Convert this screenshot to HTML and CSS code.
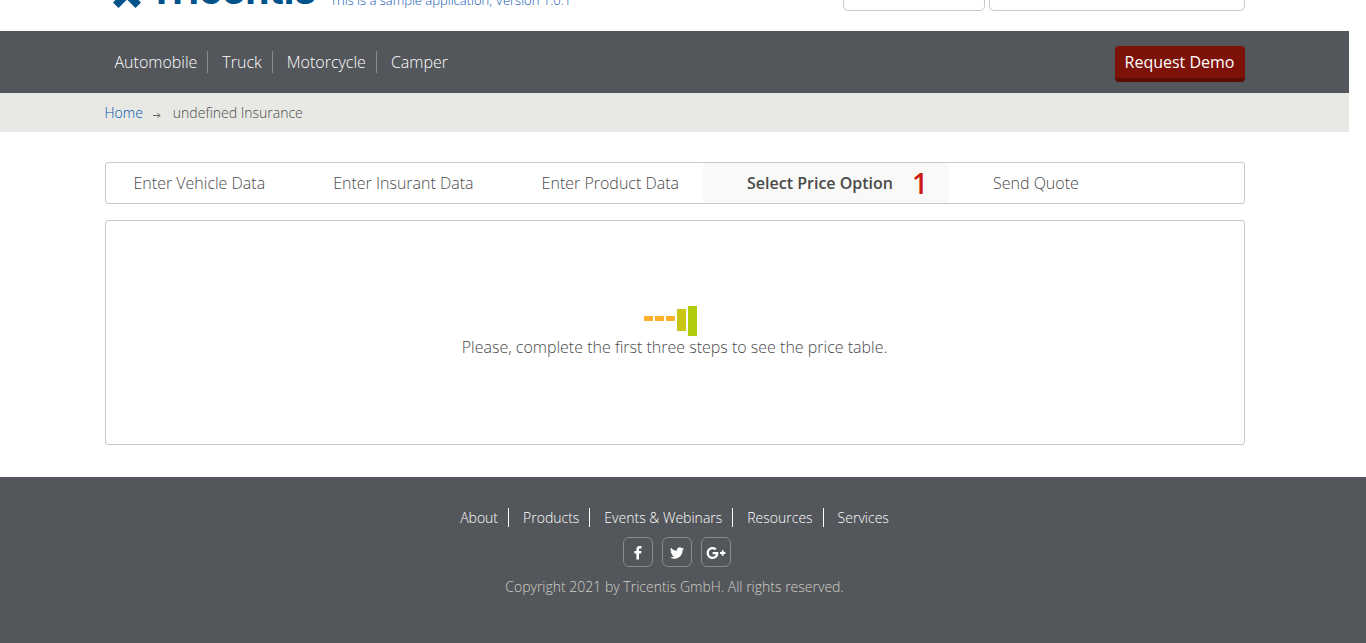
FILE: index.html
```html
<!DOCTYPE html>
<html lang="en">
<head>
<meta charset="utf-8">
<title>Select Price Option</title>
<link rel="stylesheet" href="styles.css">
</head>
<body>
<header class="header">
  <div class="container header-row">
    <a class="logo" href="#">
      <svg class="logo-mark" viewBox="0 0 28 28" aria-hidden="true"><path d="M0 22.500L8.500 14L0 5.500L5.500 0L14 8.500L22.500 0L28 5.500L19.500 14L28 22.500L22.500 28L14 19.500L5.500 28Z"/></svg>
      <span class="logo-name">Tricentis</span>
    </a>
    <a class="version" href="#">This is a sample application, Version 1.0.1</a>
    <div class="header-tools">
      <select class="tool tool-select" aria-label="Language"></select>
      <input class="tool tool-search" type="text" aria-label="Search">
    </div>
  </div>
</header>
<nav class="nav" aria-label="Insurance types">
  <div class="container nav-row">
    <ul class="links nav-links">
      <li><a href="#">Automobile</a></li>
      <li><a href="#">Truck</a></li>
      <li><a href="#">Motorcycle</a></li>
      <li><a href="#">Camper</a></li>
    </ul>
    <button class="demo" type="button">Request Demo</button>
  </div>
</nav>
<div class="crumbs">
  <div class="container crumbs-row">
    <a href="#">Home</a>
    <svg class="crumb-arrow" viewBox="0 0 8 7" aria-hidden="true"><path d="M0 3.500H7M4.500 1L7 3.500L4.500 6"/></svg>
    <span>undefined Insurance</span>
  </div>
</div>
<main class="main">
  <div class="container main-stack">
    <ul class="tabs">
      <li><a class="tab tab-first" href="#">Enter Vehicle Data</a></li>
      <li><a class="tab" href="#">Enter Insurant Data</a></li>
      <li><a class="tab" href="#">Enter Product Data</a></li>
      <li><a class="tab tab-active" href="#" aria-current="step">Select Price Option<span class="counter">1</span></a></li>
      <li><a class="tab" href="#">Send Quote</a></li>
    </ul>
    <section class="panel">
      <svg class="loader" viewBox="0 0 53 30" aria-hidden="true">
        <path fill="#ffb12b" d="M0 10h9v5H0zM11 10h9v5h-9zM22 10h9v5h-9z"/>
        <path fill="#cac514" d="M33 3h9v22h-9z"/>
        <path fill="#b2cc0c" d="M44 0h9v30h-9z"/>
      </svg>
      <p class="notice">Please, complete the first three steps to see the price table.</p>
    </section>
  </div>
</main>
<footer class="footer">
  <ul class="links footer-links">
    <li><a href="#">About</a></li>
    <li><a href="#">Products</a></li>
    <li><a href="#">Events &amp; Webinars</a></li>
    <li><a href="#">Resources</a></li>
    <li><a href="#">Services</a></li>
  </ul>
  <div class="social">
    <a href="#" aria-label="Facebook"><svg width="8" height="14" viewBox="0 0 8 14"><path d="M7.500 0.100V2.400H6.200C5.200 2.400 5 2.900 5 3.600V5H7.400L7.100 7.500H5V13.500H2.400V7.500H0.400V5H2.400V3.200C2.400 1.100 3.700 0 5.600 0C6.500 0 7.300 0.100 7.500 0.100Z"/></svg></a>
    <a href="#" aria-label="Twitter"><svg width="14" height="14" viewBox="0 0 24 24"><path d="M24 4.600a10 10 0 0 1-2.800.8 5 5 0 0 0 2.100-2.700c-.9.500-2 1-3.100 1.200A4.900 4.900 0 0 0 11.800 8.400C7.700 8.200 4.100 6.200 1.700 3.200a4.900 4.900 0 0 0 1.500 6.500c-.8 0-1.600-.2-2.200-.6v.1c0 2.300 1.600 4.300 3.900 4.800-.7.200-1.500.2-2.200.1a4.900 4.900 0 0 0 4.600 3.400A9.900 9.900 0 0 1 0 19.500 14 14 0 0 0 7.500 21.700c9.200 0 14-7.500 14-14v-.6A10 10 0 0 0 24 4.600z"/></svg></a>
    <a href="#" aria-label="Google Plus"><svg width="20" height="12" viewBox="0 0 36 23"><path d="M22.500 11.700c0 6.600-4.400 11.300-11.100 11.300C5.100 23 0 17.900 0 11.500S5.100 0 11.500 0c3 0 5.700 1.100 7.700 3l-3.200 3.100c-1.200-1.100-2.700-1.700-4.500-1.700a7.100 7.100 0 0 0 0 14.200c4.500 0 6.200-3.200 6.400-4.900h-6.400V9.600h10.800c.1.700.2 1.300.2 2.100zM36 9.700v3.600h-3.400v3.400h-3.500v-3.400h-3.400V9.700h3.400V6.300h3.500v3.400z"/></svg></a>
  </div>
  <p class="copyright">Copyright 2021 by Tricentis GmbH. All rights reserved.</p>
</footer>
</body>
</html>
```
FILE: styles.css
```css
* { box-sizing: border-box; }
body {
  margin: 0;
  min-height: 100vh;
  display: flex;
  flex-direction: column;
  background: #fff;
  color: #4a4a4a;
  font: 300 16px/22px "Open Sans", sans-serif;
}
a { color: inherit; text-decoration: none; }
ul, p { margin: 0; padding: 0; list-style: none; }
.header, .nav, .crumbs, .main { margin-right: 17px; }
.container { width: 100%; max-width: 1140px; margin: 0 auto; }

.header { height: 31px; overflow: hidden; }
.header-row { height: 31px; display: flex; align-items: flex-end; padding-bottom: 20px; }
.logo { display: flex; align-items: flex-end; gap: 8px; padding-left: 8px; color: #00538b; }
.logo-mark { width: 28px; height: 28px; margin-bottom: 3px; fill: currentColor; }
.logo-name { font: 700 39px/40px Inter, sans-serif; margin-bottom: 1px; }
.version { margin: 0 auto 0 14px; font-size: 13px; line-height: 22px; color: #0c55b0; }
.header-tools { display: flex; gap: 4px; }
.tool { height: 36px; border: 1px solid #c8c8c8; border-radius: 5px; background: #fff; appearance: none; }
.tool-select { width: 142px; }
.tool-search { width: 256px; }

.nav { background: #53565a; color: #fff; }
.nav-row { height: 62px; display: flex; align-items: center; justify-content: space-between; }
.links { display: flex; }
.links li + li { margin-left: 14px; }
.links a { display: block; }
.nav-links { padding-left: 10px; }
.nav-links li { padding-right: 10px; border-right: 1px solid #888b8d; }
.links li:last-child { border-right: 0; }
.demo {
  height: 36px;
  margin-top: 4px;
  padding: 0 10px;
  border: 0;
  border-bottom: 4px solid #5c0d05;
  border-radius: 4px;
  background: #7c1208;
  color: #fff;
  font: 400 16px/32px "Open Sans", sans-serif;
}

.crumbs { background: #e8e9e4; font-size: 14px; }
.crumbs-row { height: 39px; display: flex; align-items: center; }
.crumbs a { color: #0055b0; }
.crumb-arrow { width: 8px; height: 7px; margin: 5px 12px 0 10px; fill: none; stroke: #666; }

.main { padding: 30px 0 32px; }
.main-stack { display: flex; flex-direction: column; gap: 16px; }
.tabs { display: flex; border: 1px solid #c8c9ca; border-radius: 3px; }
.tab { display: flex; align-items: center; height: 40px; padding: 0 24px 0 44px; }
.tab-first { padding-left: 28px; }
.tab-active { background: #f9f9f7; padding-right: 21px; font-weight: 600; }
.counter { margin-left: 19px; color: #cc1b0e; font-size: 28px; }
.panel {
  min-height: 225px;
  display: flex;
  flex-direction: column;
  align-items: center;
  padding: 85px 20px;
  border: 1px solid #c8c9ca;
  border-radius: 3px;
}
.loader { width: 53px; height: 30px; margin-right: 8px; }

.footer {
  flex: 1;
  display: flex;
  flex-direction: column;
  align-items: center;
  padding: 31px 17px 32px 0;
  background: #53565a;
  color: #fff;
  font-size: 14px;
}
.footer-links { line-height: 19px; }
.footer-links li { padding-right: 10px; border-right: 1px solid #fff; }
.footer-links li:last-child { padding-right: 0; }
.social { display: flex; gap: 9px; margin: 10px 0 9px; padding-left: 5px; }
.social a {
  width: 30px;
  height: 30px;
  display: grid;
  place-items: center;
  padding-top: 1px;
  border: 1px solid #888b8d;
  border-radius: 6px;
}
.social svg { fill: #fff; }
.copyright { color: #d0d0c8; }
```
